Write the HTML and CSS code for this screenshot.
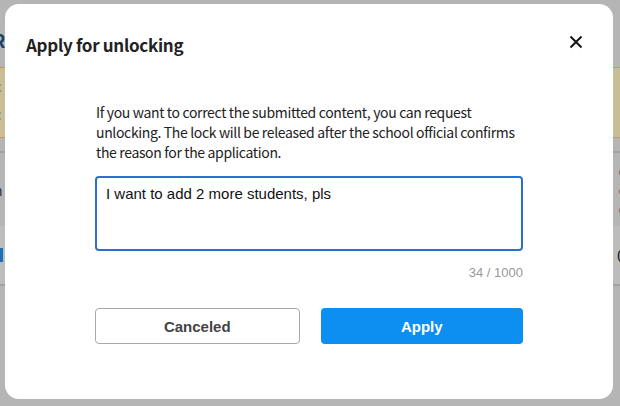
FILE: index.html
```html
<!DOCTYPE html>
<html lang="en">
<head>
<meta charset="utf-8">
<title>Apply for unlocking</title>
<link rel="stylesheet" href="styles.css">
</head>
<body>
<div class="page">
  <div class="page-head"><span class="head-letter">R</span></div>
  <div class="notice">
    <span class="notice-line">c</span>
    <span class="notice-line link">c</span>
  </div>
  <div class="gap-row"></div>
  <div class="info-row">
    <span class="left-text">n</span>
    <span class="right-text">e<br>d<br>e</span>
  </div>
  <div class="total-row">
    <span class="marker"></span>
    <span class="right-num">0</span>
  </div>
</div>

<div class="overlay">
  <div class="modal" role="dialog" aria-labelledby="modal-title">
    <div class="modal-header">
      <h2 id="modal-title" class="modal-title">Apply for unlocking</h2>
      <button class="close-btn" aria-label="Close">
        <svg width="14" height="14" viewBox="0 0 14 14"><path d="M1.5 1.5L12.5 12.5M12.5 1.5L1.5 12.5" stroke="#111" stroke-width="1.9" fill="none"/></svg>
      </button>
    </div>
    <div class="modal-body">
      <p class="desc">If you want to correct the submitted content, you can request unlocking. The lock will be released after the school official confirms the reason for the application.</p>
      <div class="field">I want to add 2 more students, pls</div>
      <div class="counter">34 / 1000</div>
      <div class="actions">
        <button class="btn btn-cancel">Canceled</button>
        <button class="btn btn-apply">Apply</button>
      </div>
    </div>
  </div>
</div>
</body>
</html>
```

FILE: styles.css
```css
html, body {
  margin: 0;
  padding: 0;
}
body {
  width: 620px;
  height: 406px;
  overflow: hidden;
  background: #b5b5b5;
  font-family: "Noto Sans CJK JP", "Noto Sans", sans-serif;
  position: relative;
}

/* background page (already dimmed by overlay) */
.page {
  display: flex;
  flex-direction: column;
  color: #222;
  font-size: 14px;
}
.page-head {
  height: 67px;
  display: flex;
  align-items: center;
  padding-top: 12px;
  box-sizing: border-box;
}
.head-letter {
  margin-left: -7px;
  font-size: 18px;
  font-weight: 700;
  color: #1d3f66;
}
.notice {
  height: 71px;
  background: #c9bd98;
  border-top: 1px solid #d09a4a;
  border-bottom: 1px solid #d09a4a;
  display: flex;
  flex-direction: column;
  padding-top: 4px;
  box-sizing: border-box;
}
.notice-line {
  margin-left: -6px;
  line-height: 28px;
  color: #333;
}
.notice-line.link { color: #1d6fb8; }
.gap-row {
  height: 13px;
  border-bottom: 2px solid #a2a2a2;
}
.info-row {
  height: 73px;
  display: flex;
  justify-content: space-between;
  align-items: center;
}
.left-text { margin-left: -6px; color: #333; }
.right-text {
  margin-right: -6px;
  font-size: 12px;
  line-height: 19px;
  color: #666;
}
.total-row {
  height: 58px;
  background: #bcbcbc;
  border-bottom: 2px solid #a2a2a2;
  display: flex;
  justify-content: space-between;
  align-items: center;
}
.marker {
  width: 3px;
  height: 14px;
  background: #1d6fb8;
}
.right-num {
  margin-right: -6px;
  font-size: 16px;
  color: #222;
}

/* overlay + modal */
.overlay {
  position: absolute;
  inset: 0;
}
.modal {
  position: absolute;
  left: 5px;
  top: 4px;
  width: 608px;
  height: 395px;
  background: #fff;
  border-radius: 14px;
  box-sizing: border-box;
}
.modal-header {
  display: flex;
  align-items: center;
  justify-content: space-between;
  height: 80px;
  padding: 0 30px 0 21px;
  box-sizing: border-box;
}
.modal-title {
  margin: 0;
  font-size: 17px;
  font-weight: 700;
  color: #222;
  letter-spacing: -0.3px;
}
.close-btn {
  border: 0;
  background: none;
  padding: 0;
  width: 14px;
  height: 14px;
  display: flex;
  margin-top: -4px;
}
.modal-body {
  padding: 18px 90px 0 90px;
}
.desc {
  margin: 0 -8px 0 0;
  font-size: 14px;
  line-height: 20px;
  letter-spacing: -0.35px;
  color: #222;
  padding-left: 1px;
}
.field {
  margin-top: 14px;
  height: 75px;
  box-sizing: border-box;
  border: 2px solid #2a6fd6;
  border-radius: 4px;
  padding: 6px 9px;
  font-family: "Liberation Sans", Arial, sans-serif;
  font-size: 15px;
  line-height: 20px;
  color: #111;
}
.counter {
  margin-top: 14px;
  text-align: right;
  font-family: "Liberation Sans", Arial, sans-serif;
  font-size: 13px;
  line-height: 16px;
  color: #999;
}
.actions {
  margin-top: 27px;
  display: flex;
  gap: 21px;
}
.btn {
  flex: 1;
  height: 36px;
  border-radius: 4px;
  font-family: "Liberation Sans", Arial, sans-serif;
  font-size: 15px;
  font-weight: 700;
  cursor: pointer;
}
.btn-cancel {
  background: #fff;
  border: 1px solid #aaa;
  color: #444;
}
.btn-apply {
  background: #0d8ff2;
  border: 0;
  color: #fff;
}
```
